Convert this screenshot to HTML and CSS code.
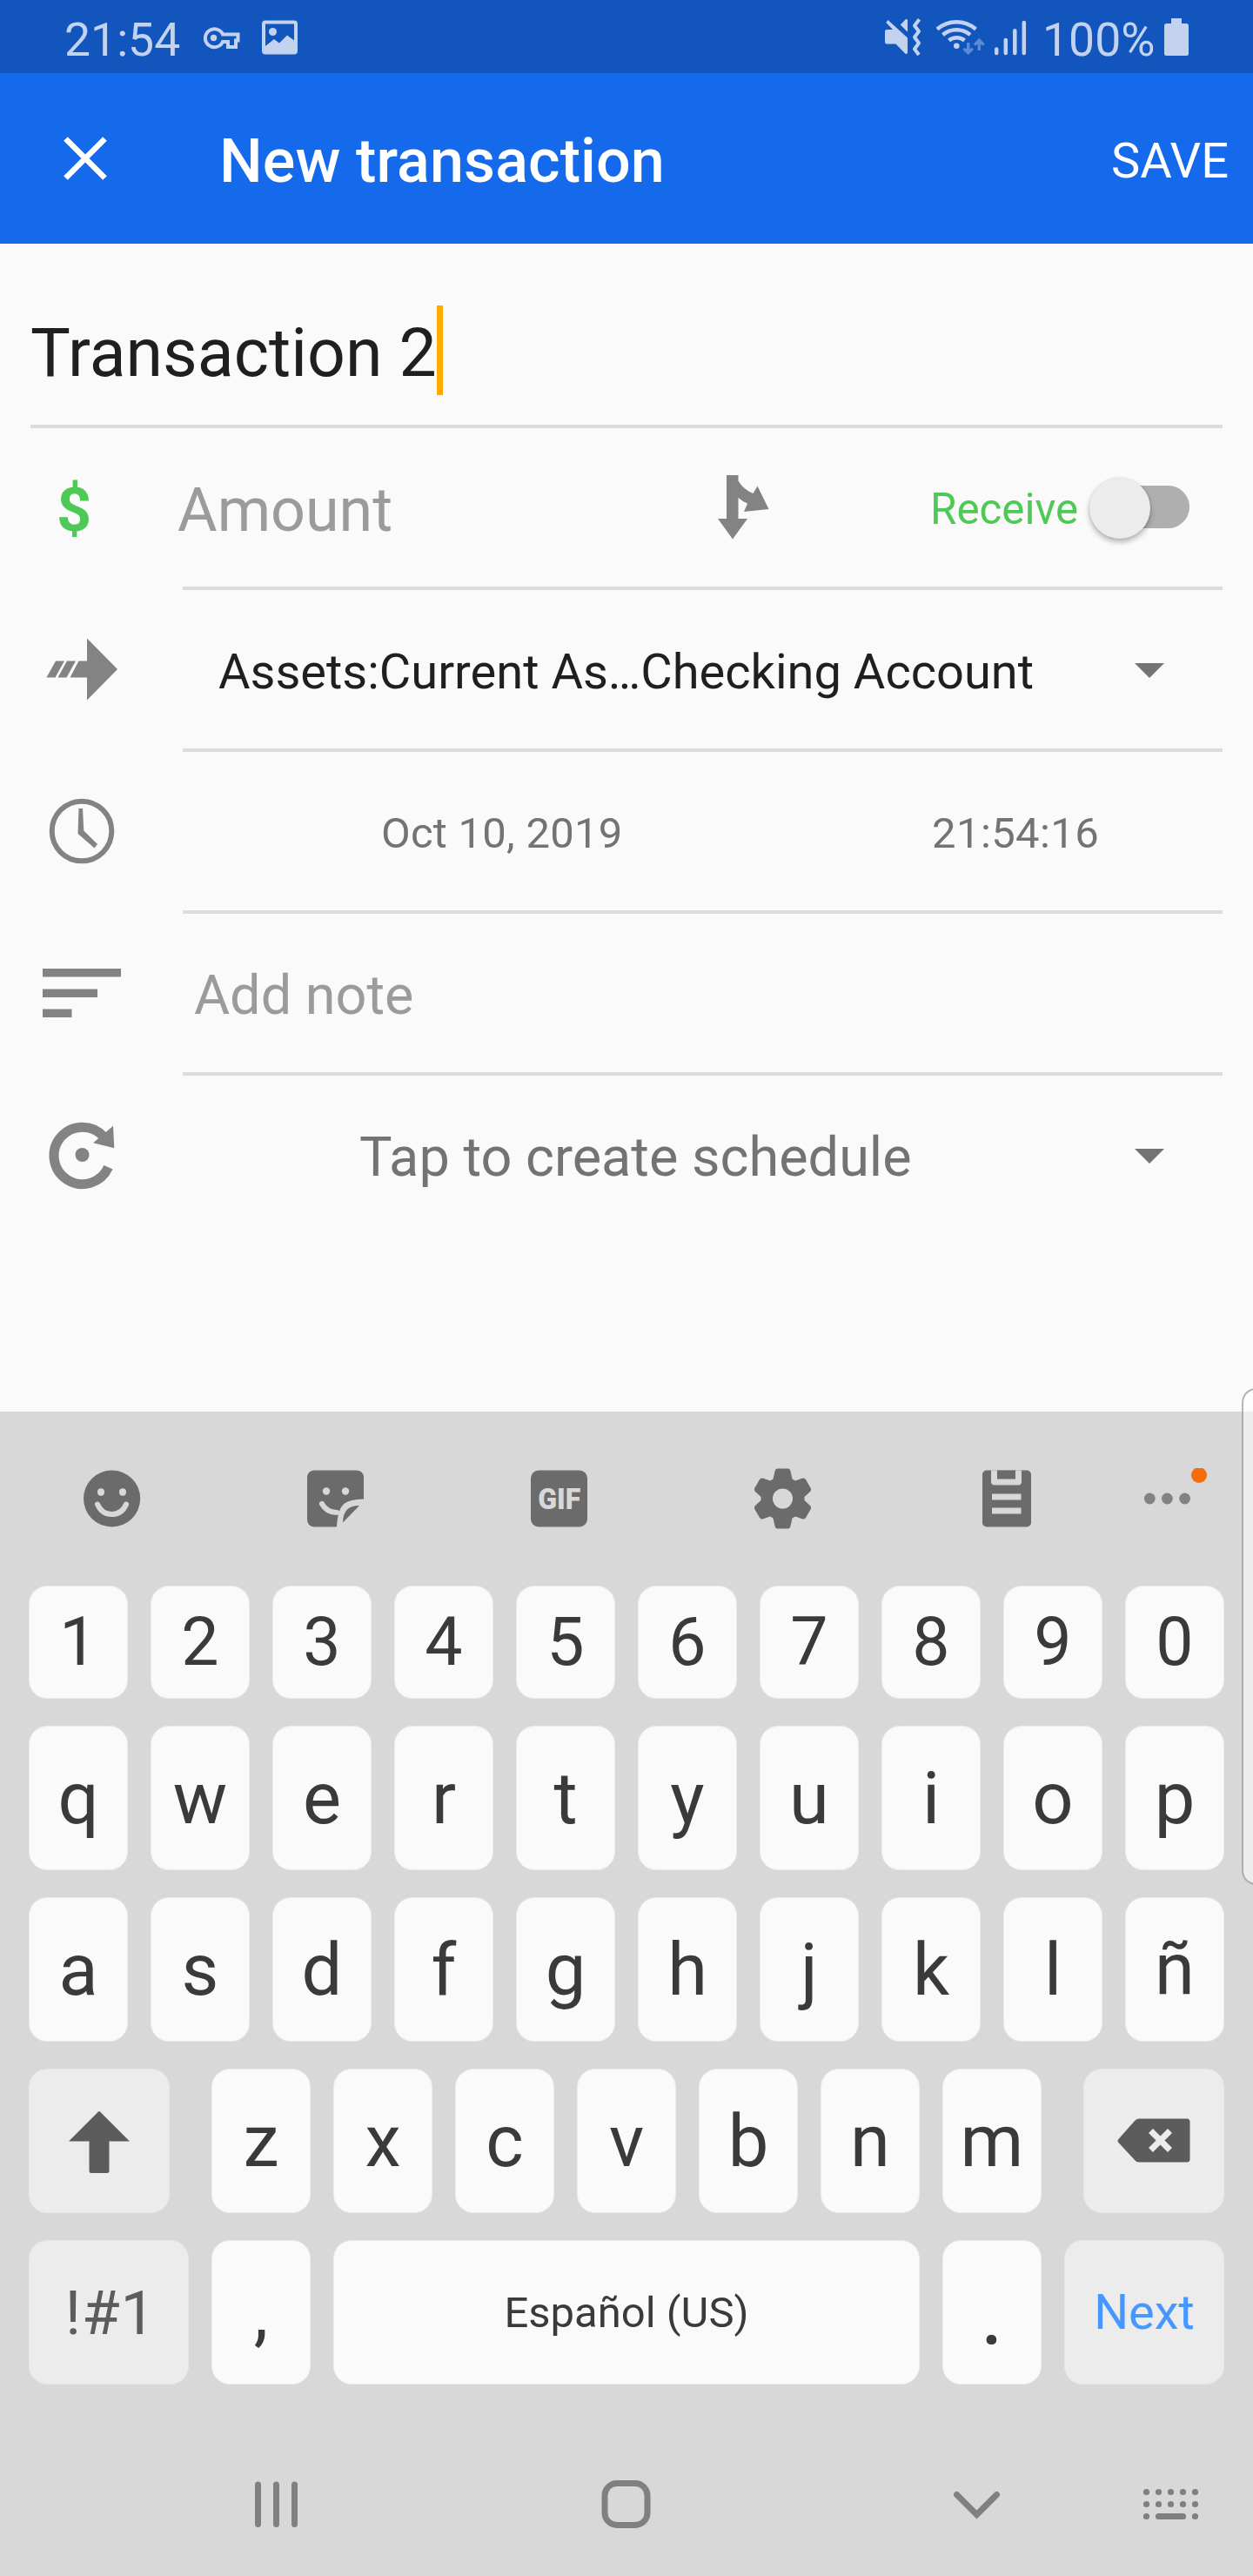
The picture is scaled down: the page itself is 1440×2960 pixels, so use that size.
FILE: index.html
```html
<!DOCTYPE html>
<html lang="en">
<head>
<meta charset="utf-8">
<title>New transaction</title>
<link rel="stylesheet" href="styles.css">
</head>
<body>
<header class="status">
  <span class="clock">21:54</span>
  <svg class="status-left" width="112" height="44" viewBox="232 21 112 44">
    <path class="st-line" stroke-width="4" d="M256 39.5H273.500V46.500H271V54H262V48H256A10.500 10.500 0 1 1 256 39.500Z"/>
    <circle cx="245.500" cy="43.500" r="3.700"/>
    <path fill-rule="evenodd" d="M305 23.500H338Q342 23.500 342 27.500V58.500Q342 62.500 338 62.500H305Q301 62.500 301 58.500V27.500Q301 23.500 305 23.500ZM305 27.500V53L315 45L321 49.500L330 40.500L338 46.500V27.500Z"/>
    <circle cx="313.500" cy="36.500" r="4.500"/>
  </svg>
  <svg class="status-right" width="170" height="46" viewBox="1014 20 170 46">
    <path d="M1020.500 23L1043 43.500V61L1041 62.300L1029.500 50.500H1019Q1017 50.500 1017 48.500V36Q1017 34 1019 34H1026L1018.300 26ZM1041 22L1043 22.500V36.700L1034.800 28.500Z"/>
    <path class="st-line" stroke-width="4" stroke-linejoin="round" d="M1056.500 22.300L1051 29.500L1056 36L1051 42.800L1056 49.500L1051 56.300L1056 63"/>
    <g class="st-line" stroke-width="4.500">
      <path d="M1077 33.500A34 34 0 0 1 1121.500 33.500M1083.500 40A24.500 24.500 0 0 1 1115 40M1090.500 46.500A14.500 14.500 0 0 1 1108.500 46.500"/>
    </g>
    <circle cx="1099.300" cy="52.700" r="3.300"/>
    <path class="st-faint" d="M1111 49H1114.500V56L1117.500 55L1119 57L1112.700 63L1106.500 57L1108 55L1111 56ZM1123.700 58H1127V51L1130 52.500L1131.700 50.500L1125.300 43.700L1119 50.500L1120.500 52.500L1123.700 51Z"/>
    <path class="st-line bars" d="M1145.200 56.500V61M1155.800 46V61M1166.300 35.300V61M1176.800 26V61"/>
  </svg>
  <span class="percent">100%</span>
  <svg width="28" height="44" viewBox="1338 21 28 44"><path d="M1346 21H1358V27H1363.500Q1366 27 1366 29.500V61.500Q1366 64 1363.500 64H1340.500Q1338 64 1338 61.500V29.500Q1338 27 1340.500 27H1346Z"/></svg>
</header>

<nav class="appbar">
  <svg class="close" width="52" height="52" viewBox="0 0 52 52"><path d="M3.500 3.500L48.500 48.500M48.500 3.500L3.500 48.500"/></svg>
  <h1>New transaction</h1>
  <span class="save">SAVE</span>
</nav>

<main class="form">
  <div class="title-field"><span>Transaction 2</span><i class="caret"></i></div>
  <div class="row">
    <div class="icon dollar">$</div>
    <div class="field">
      <span class="amount">Amount</span>
      <svg class="split" width="60" height="76" viewBox="824 545 60 76"><path d="M835 546H848.500V552.500C852 559 858.500 564 865.500 567L870.500 558.500L883.500 585L855 588L859 578.500Q853 576 848.500 572V596H859L842 619.500L825 596H835Z"/></svg>
      <span class="receive">Receive</span>
      <span class="switch"><i></i></span>
    </div>
  </div>
  <div class="row">
    <div class="icon"><svg width="100" height="100" viewBox="44 719 100 100"><path d="M100 733.500L135 769L100 804.500V778.500H80.500L90.500 759.500H100ZM77 759.500H87L76.500 778.500H66.500ZM64 759.500H74L63.500 778.500H53.500Z"/></svg></div>
    <div class="field">
      <span class="account">Assets:Current As…Checking Account</span>
      <i class="drop"></i>
    </div>
  </div>
  <div class="row">
    <div class="icon"><svg width="100" height="100" viewBox="44 905 100 100"><circle class="ring" cx="94" cy="955" r="34.300"/><path d="M90.500 929H95L96.300 954.500L112 970L108.500 974.500L89.500 958Z"/></svg></div>
    <div class="field">
      <span class="date">Oct 10, 2019</span>
      <span class="time">21:54:16</span>
    </div>
  </div>
  <div class="row">
    <div class="icon"><svg width="100" height="100" viewBox="44 1091 100 100"><path d="M49 1113H139V1122.500H49ZM49 1136.500H112V1146H49ZM49 1159.500H82.500V1169H49Z"/></svg></div>
    <div class="field"><span class="note">Add note</span></div>
  </div>
  <div class="row last">
    <div class="icon"><svg width="100" height="100" viewBox="44 1277 100 100"><path class="loop" d="M124.500 1341.300A32.700 32.700 0 1 1 119 1306"/><path d="M130 1293.700L131.300 1319.300L107 1313.300Z"/><circle cx="94.500" cy="1327" r="8"/></svg></div>
    <div class="field">
      <span class="schedule">Tap to create schedule</span>
      <i class="drop"></i>
    </div>
  </div>
</main>

<section class="keyboard">
  <div class="tools">
    <svg width="66" height="70" viewBox="96 1686.500 66 70"><circle cx="128.600" cy="1721.500" r="32.600"/><g class="hole"><ellipse cx="116" cy="1714" rx="4" ry="4.200"/><ellipse cx="141" cy="1714" rx="4" ry="4.200"/></g><path class="cut" d="M112 1728Q117 1739.500 128.600 1739.500T145 1728"/></svg>
    <svg width="66" height="70" viewBox="353 1686.500 66 70"><path d="M362 1689H409Q418 1689 418 1698V1722Q402 1722.500 396 1727Q388 1733 387 1754H362Q353 1754 353 1745V1698Q353 1689 362 1689ZM413 1729.500L394 1749Q394 1739 399.500 1733.500Q404 1729.500 413 1729.500Z"/><g class="hole"><circle cx="375" cy="1713" r="4.200"/><circle cx="397" cy="1713" r="4.200"/></g><path class="cut" d="M370 1727.500Q375 1737 387 1737.500"/></svg>
    <svg width="66" height="70" viewBox="610 1686.500 66 70"><rect x="610" y="1689" width="65" height="65" rx="9"/><text class="gif" x="642.700" y="1733.500" textLength="49" lengthAdjust="spacingAndGlyphs">GIF</text></svg>
    <svg width="66" height="70" viewBox="867 1686.500 66 70"><path fill-rule="evenodd" d="M893 1687H906Q908 1687.500 908.500 1690L910.500 1699L914 1701L922.500 1698Q924.500 1697.500 926 1699.500L932 1710Q932.500 1712 931 1713.500L924.500 1719.500V1723.500L931 1729.500Q932.500 1731 932 1733L926 1743.500Q924.500 1745.500 922.500 1745L914 1742L910.500 1744L908.500 1753Q908 1755.500 906 1756H893Q891 1755.500 890.500 1753L888.500 1744L885 1742L876.500 1745Q874.500 1745.500 873 1743.500L867 1733Q866.500 1731 868 1729.500L874.500 1723.500V1719.500L868 1713.500Q866.500 1712 867 1710L873 1699.500Q874.500 1697.500 876.500 1698L885 1701L888.500 1699L890.500 1690Q891 1687.500 893 1687ZM899.500 1710A11.500 11.500 0 1 0 899.500 1733A11.500 11.500 0 1 0 899.500 1710Z"/></svg>
    <svg width="66" height="70" viewBox="1124 1686.500 66 70"><rect x="1129" y="1689" width="56" height="65" rx="5"/><g class="hole"><path d="M1139 1689H1174V1702Q1174 1706 1170 1706H1143Q1139 1706 1139 1702Z"/><path d="M1140 1716H1173.500V1723H1140ZM1140 1732H1173.500V1739H1140Z"/></g><path d="M1146 1689H1167V1699H1146Z"/></svg>
    <svg class="more" width="80" height="70" viewBox="1312 1686.500 80 70"><circle cx="1321.300" cy="1721.500" r="6.400"/><circle cx="1341.400" cy="1721.500" r="6.400"/><circle cx="1361.600" cy="1721.500" r="6.400"/><circle class="badge" cx="1378" cy="1694.500" r="9"/></svg>
  </div>
  <div class="keys numbers"><b>1</b><b>2</b><b>3</b><b>4</b><b>5</b><b>6</b><b>7</b><b>8</b><b>9</b><b>0</b></div>
  <div class="keys"><b>q</b><b>w</b><b>e</b><b>r</b><b>t</b><b>y</b><b>u</b><b>i</b><b>o</b><b>p</b></div>
  <div class="keys"><b>a</b><b>s</b><b>d</b><b>f</b><b>g</b><b>h</b><b>j</b><b>k</b><b>l</b><b>ñ</b></div>
  <div class="keys letters">
    <b class="fn side"><svg width="72" height="74" viewBox="78 2421 72 74"><path d="M113 2424.500Q114 2423.500 115 2424.500L149 2458.500H125.500V2492.500Q125.500 2495 123 2495H105Q102.500 2495 102.500 2492.500V2458.500H79Z"/></svg></b>
    <b>z</b><b>x</b><b>c</b><b>v</b><b>b</b><b>n</b><b>m</b>
    <b class="fn side"><svg class="del" width="84" height="52" viewBox="1284 2434 84 52"><path d="M1309 2434.500H1364Q1367.500 2434.500 1367.500 2438V2481Q1367.500 2484.500 1364 2484.500H1309Q1306 2484.500 1304 2482L1285 2461.500Q1284 2460 1285 2458.500L1304 2437Q1306 2434.500 1309 2434.500Z"/><path class="x" d="M1322.500 2448.500L1344.500 2470.500M1344.500 2448.500L1322.500 2470.500"/></svg></b>
  </div>
  <div class="keys bottom">
    <b class="fn wide sym">!#1</b><b>,</b><b class="space">Español (US)</b><b class="dot">.</b><b class="fn wide next">Next</b>
  </div>
  <svg class="navbar" width="1440" height="70" viewBox="0 2842 1440 70">
    <path class="nav-line" d="M296.500 2855V2900.500M317.500 2855V2900.500M338.500 2855V2900.500"/>
    <rect class="nav-line" x="695" y="2853.500" width="49" height="48" rx="14"/>
    <path class="nav-line" d="M1099.500 2866.500L1122.500 2889.500L1145.500 2866.500"/>
    <path class="nav-dots" d="M1317.500 2863.500h0M1331.500 2863.500h0M1345.500 2863.500h0M1359.500 2863.500h0M1373.500 2863.500h0M1317.500 2877.500h0M1331.500 2877.500h0M1345.500 2877.500h0M1359.500 2877.500h0M1373.500 2877.500h0M1317.500 2891.500h0M1331.500 2891.500H1359.500M1373.500 2891.500h0"/>
  </svg>
</section>
<div class="edge-handle"></div>
</body>
</html>
```
FILE: styles.css
```css
* { box-sizing: border-box; }
body {
  margin: 0;
  width: 1440px;
  height: 2960px;
  position: relative;
  overflow: hidden;
  background: #fafafa;
  font-family: Roboto, "Liberation Sans", sans-serif;
  color: #1f1f1f;
}
svg { display: block; flex: none; }
span { white-space: nowrap; }

/* status bar */
.status {
  height: 84px;
  padding: 2px 74px 0 74px;
  display: flex;
  align-items: center;
  background: #1155bd;
  color: #c3d3ef;
  fill: #c3d3ef;
  font-size: 53.500px;
}
.clock, .percent { padding-top: 4px; }
.clock { width: 158px; }
.status-right { margin-left: auto; margin-right: 14px; }
.percent { width: 132px; margin-right: 8px; }
.st-line { fill: none; stroke: #c3d3ef; }
.st-faint { fill: #5c8bd6; }
.bars { stroke-width: 4.5; stroke-linecap: round; }

/* app bar */
.appbar {
  height: 196px;
  padding: 0 28px 0 72px;
  display: flex;
  align-items: center;
  background: #1569eb;
  color: #fff;
}
.close { fill: none; stroke: #fff; stroke-width: 6.5; }
.appbar h1 { margin: 0 0 0 128px; padding-top: 6px; font-size: 70px; font-weight: 500; letter-spacing: .12px; white-space: nowrap; }
.save { margin-left: auto; padding-top: 6px; font-size: 56px; }

/* form */
.form { height: 1342px; }
.title-field {
  height: 212px;
  margin: 0 35px;
  padding-top: 43px;
  display: flex;
  align-items: center;
  border-bottom: 4px solid #dcdcdc;
  font-size: 77px;
}
.caret { width: 7px; height: 103px; margin: -7px 0 0 0; background: #ffab00; }
.row { display: grid; grid-template-columns: 210px 1195px; height: 186px; }
.icon { height: 182px; padding-left: 44px; display: flex; align-items: center; fill: #838383; }
.dollar { padding: 5px 0 0 65px; font-size: 70px; font-weight: 700; color: #4fc955; }
.ring { fill: none; stroke: #838383; stroke-width: 6; }
.loop { fill: none; stroke: #838383; stroke-width: 11; }
.field { display: flex; align-items: center; border-bottom: 4px solid #dcdcdc; color: #737373; }
.last .field { border-bottom-color: transparent; }
.field span { padding-top: 5px; }
.amount { width: 620px; margin-left: -6px; font-size: 70px; color: #9b9b9b; }
.split { fill: #838383; }
.field .receive { margin-left: 185px; padding-top: 3px; font-size: 49.300px; color: #4fc955; }
.field .switch { width: 102px; height: 49px; margin: -2px 38px 0 auto; padding: 0; border-radius: 25px; background: #afafaf; }
.switch i { display: block; width: 70px; height: 70px; margin: -9px 0 0 -13px; border-radius: 50%; background: #ececec; box-shadow: 0 4px 6px rgba(0,0,0,.28), 0 0 3px rgba(0,0,0,.12); }
.account { margin-left: 41px; font-size: 56px; color: #1f1f1f; }
.drop { margin: 3px 67px 0 auto; border: 17px solid transparent; border-top-color: #737373; border-bottom: 0; }
.date { width: 633px; margin-left: 228px; font-size: 49px; letter-spacing: .25px; }
.time { font-size: 49px; letter-spacing: .4px; }
.note { margin-left: 13px; font-size: 63px; color: #9b9b9b; }
.schedule { margin-left: 203px; font-size: 63px; }

/* keyboard */
.keyboard { height: 1338px; background: #d8d8d8; color: #3a3a3a; }
.tools { height: 200px; padding-left: 96px; display: flex; align-items: center; gap: 191px; fill: #6b6b6b; }
.hole { fill: #d8d8d8; }
.cut { fill: none; stroke: #d8d8d8; stroke-width: 6; stroke-linecap: round; }
.gif { fill: #d8d8d8; font-size: 33px; font-weight: 900; text-anchor: middle; }
.more { margin-left: -69px; fill: #828282; }
.badge { fill: #f76c0a; }
.keys { display: flex; justify-content: space-between; height: 166px; margin: 0 33px 31px; }
.keys b {
  width: 114px;
  display: flex;
  align-items: center;
  justify-content: center;
  border: 1px solid #ececec;
  border-radius: 21px;
  background: #fafafa;
  font-size: 83px;
  font-weight: 400;
}
.keys.numbers { height: 130px; }
.numbers b { font-size: 77px; }
.keys .fn { background: #ececec; border-color: #e6e6e6; color: #5c5c5c; fill: #5c5c5c; }
.keys .side { width: 162px; }
.letters .side:first-child { margin-right: 22px; }
.letters .side:last-child { margin-left: 22px; }
.del .x { fill: none; stroke: #ececec; stroke-width: 7; }
.keys .wide { width: 184px; }
.keys .sym { font-size: 71px; letter-spacing: .8px; padding-left: 4px; }
.keys .space { width: 674px; font-size: 49px; }
.keys .dot { font-size: 104px; }
.keys .next { font-size: 56px; color: #4498ff; }
.keys.bottom { margin-bottom: 0; }
.navbar { margin-top: 102px; }
.nav-line { fill: none; stroke: #808080; stroke-width: 7; stroke-linecap: round; }
.nav-dots { fill: none; stroke: #808080; stroke-width: 7.200; stroke-linecap: round; }

/* edge panel handle floating over the screen */
.edge-handle {
  position: absolute;
  right: -20px;
  top: 1595px;
  width: 33px;
  height: 571px;
  border: 2px solid rgba(110,110,110,.5);
  border-radius: 22px;
  background: rgba(255,255,255,.55);
}
```
